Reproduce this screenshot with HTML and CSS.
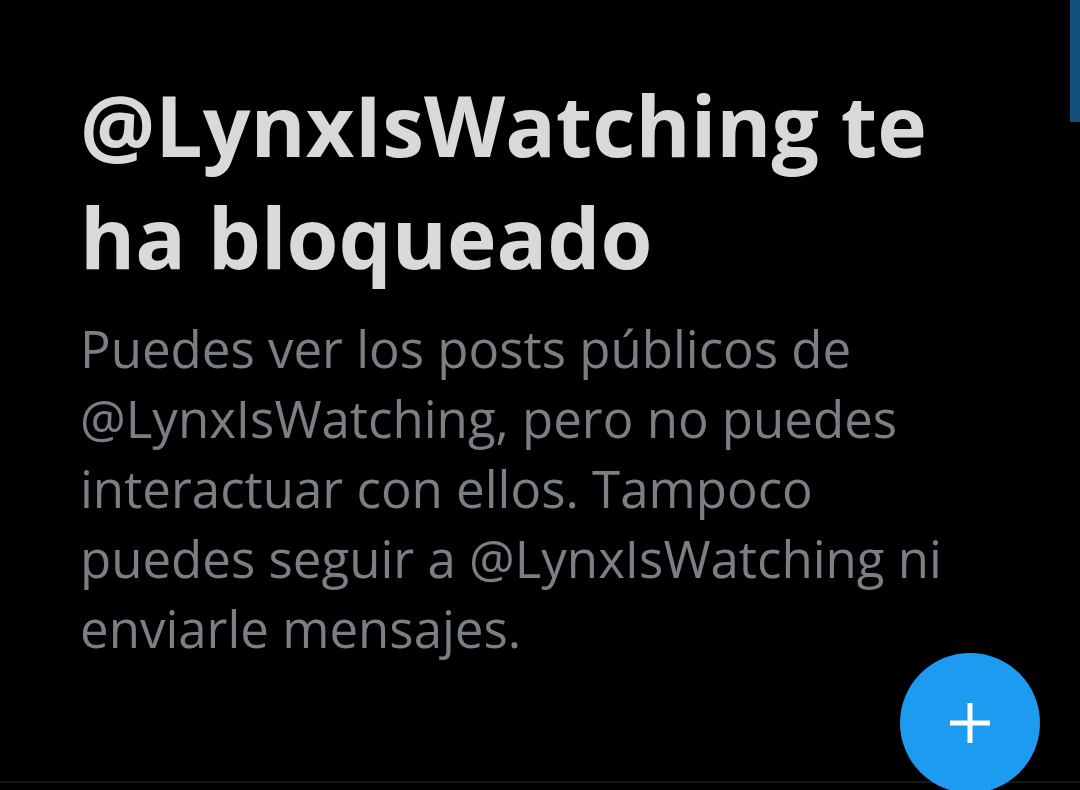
FILE: index.html
```html
<!DOCTYPE html>
<html lang="es">
<head>
<meta charset="utf-8">
<meta name="viewport" content="width=device-width, initial-scale=1">
<title>@LynxIsWatching te ha bloqueado</title>
<link rel="stylesheet" href="styles.css">
</head>
<body>
<main class="blocked">
<h1 class="title">@LynxIsWatching te ha bloqueado</h1>
<p class="message">Puedes ver los posts públicos de @LynxIsWatching, pero no puedes interactuar con ellos. Tampoco puedes seguir a @LynxIsWatching ni enviarle mensajes.</p>
</main>
<div class="scrollbar"></div>
<div class="divider"></div>
<button class="compose" type="button" aria-label="Publicar">
<svg class="plus" viewBox="0 0 42 42" aria-hidden="true"><path d="M21 1v40M1 21h40" stroke="#fff" stroke-width="5"/></svg>
</button>
</body>
</html>
```
FILE: styles.css
```css
* { box-sizing: border-box; }
body {
  margin: 0;
  min-height: 100vh;
  position: relative;
  overflow: hidden;
  background: #000;
  font-family: "Open Sans", "Noto Sans", sans-serif;
}
.blocked { padding: 69px 80px; }
.title {
  margin: 0;
  color: #d9d9d9;
  font-size: 84px;
  font-weight: 700;
  line-height: 112px;
}
.message {
  margin: 20px 0 0;
  color: #7a7f86;
  font-size: 51px;
  line-height: 70px;
}
.scrollbar {
  position: absolute;
  top: 0;
  right: 0;
  width: 10px;
  height: 122px;
  background: #124f7b;
}
.divider {
  position: absolute;
  right: 0;
  bottom: 7px;
  left: 0;
  height: 2px;
  background: #161616;
}
.compose {
  position: absolute;
  right: 40px;
  bottom: -3px;
  display: grid;
  place-items: center;
  width: 140px;
  height: 140px;
  padding: 0;
  border: 0;
  border-radius: 50%;
  background: #1d9bf0;
}
.plus { width: 42px; height: 42px; }
```
